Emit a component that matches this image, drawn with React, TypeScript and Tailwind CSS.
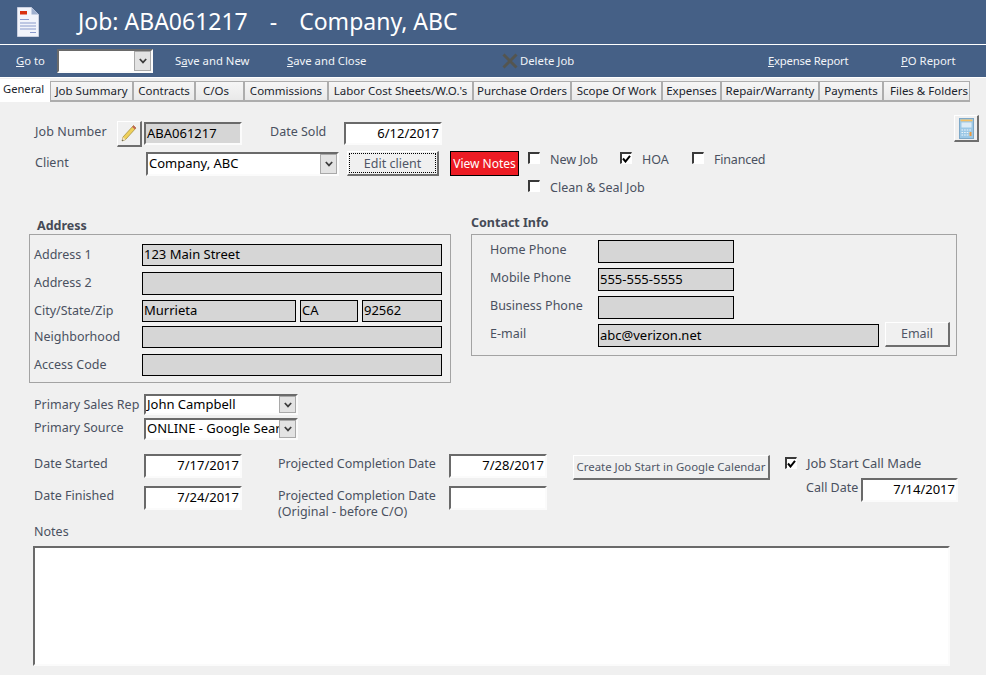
import React from "react";

const labelCls = "text-[12.5px] leading-[16px] text-[#4a5160]";

function Arrow() {
  return (
    <svg width="8" height="6" viewBox="0 0 8 6">
      <path d="M0.8 1 L4 4.4 L7.2 1" fill="none" stroke="#3c3c3c" strokeWidth="1.7" />
    </svg>
  );
}

function SunkenField({ className, value, right }: { className: string; value?: string; right?: boolean }) {
  return (
    <div className={"flex items-center border-t-2 border-l-2 border-r-2 border-b-2 border-t-[#6a6a6a] border-l-[#6a6a6a] border-r-[#fbfbfb] border-b-[#fbfbfb] px-px text-[13px] text-black whitespace-nowrap overflow-hidden " + (right ? "justify-end " : "") + className}>
      {value}
    </div>
  );
}

function GrayField({ className, value }: { className: string; value?: string }) {
  return (
    <div className={"flex items-center border border-black bg-[#d6d6d6] pl-px text-[13px] text-black whitespace-nowrap overflow-hidden " + className}>
      {value}
    </div>
  );
}

function Select({ className, value, btn }: { className: string; value?: string; btn: string }) {
  return (
    <div className={"flex items-stretch border-t-2 border-l-2 border-r-2 border-b-2 border-t-[#6a6a6a] border-l-[#6a6a6a] border-r-[#fbfbfb] border-b-[#fbfbfb] bg-white " + className}>
      <div className="flex-1 min-w-0 flex items-center overflow-hidden whitespace-nowrap pl-px text-[13px] text-black">{value}</div>
      <div className={"flex items-center justify-center bg-[#e3e3e3] border border-[#a9a9a9] " + btn}>
        <Arrow />
      </div>
    </div>
  );
}

function Raised({ className, children }: { className: string; children: React.ReactNode }) {
  return (
    <div className={"flex items-center justify-center border-t border-l border-t-white border-l-white border-r-2 border-b-2 border-r-[#6e6e6e] border-b-[#6e6e6e] bg-[#f0f0f0] text-[#4f5666] whitespace-nowrap " + className}>
      {children}
    </div>
  );
}

function Check({ on, className }: { on?: boolean; className?: string }) {
  return (
    <div className={"w-[12px] h-[12px] shrink-0 flex items-center justify-center border-t-2 border-l-2 border-t-[#3a3a3a] border-l-[#3a3a3a] border-r border-b border-r-white border-b-white bg-white " + (className || "")}>
      {on && (
        <svg width="9" height="8" viewBox="0 0 9 8">
          <path d="M1 3.5 L3.5 6.5 L8 0.8" fill="none" stroke="#000" strokeWidth="2" />
        </svg>
      )}
    </div>
  );
}

const tabs: [string, string][] = [
  ["Job Summary", "w-[83px] justify-center"],
  ["Contracts", "w-[62px] justify-center"],
  ["C/Os", "w-[49px] justify-start pl-[7px]"],
  ["Commissions", "w-[84px] justify-center"],
  ["Labor Cost Sheets/W.O.'s", "w-[145px] justify-center"],
  ["Purchase Orders", "w-[98px] justify-center"],
  ["Scope Of Work", "w-[91px] justify-center"],
  ["Expenses", "w-[59px] justify-center"],
  ["Repair/Warranty", "w-[98px] justify-center"],
  ["Payments", "w-[64px] justify-center"],
  ["Files & Folders", "w-[87px] justify-end pr-px"],
];

function DocIcon() {
  return (
    <svg width="22" height="30" viewBox="0 0 22 30" className="shrink-0">
      <path d="M0.5 0.5 H14.5 L21.5 7.5 V29.5 H0.5 Z" fill="#f2f4fb" stroke="#c9cfe0" />
      <path d="M14.5 0.5 V7.5 H21.5 Z" fill="#9fb0cf" />
      <rect x="3" y="4" width="7" height="3.5" fill="#d9300f" />
      <path d="M3 12.5 H12 M3 16 H19 M3 19 H19 M3 22 H19 M13 25.5 H19" stroke="#8a99cc" strokeWidth="1.2" />
    </svg>
  );
}

function PencilIcon() {
  return (
    <svg width="18" height="19" viewBox="0 0 18 19">
      <path d="M13.5 1.5 L16 4 L5.5 15.6 L2 17 L3 13 Z" fill="#efd05a" stroke="#9c8634" strokeWidth="0.7" />
      <path d="M13.5 1.5 L16 4 L14.8 5.3 L12.2 2.9 Z" fill="#c2605c" />
      <path d="M3 13 L5.5 15.6 L2 17 Z" fill="#efe2c6" />
      <path d="M2 17 L2.4 15.6 L3.5 16.4 Z" fill="#444" />
    </svg>
  );
}

function CalcIcon() {
  return (
    <svg width="15" height="21" viewBox="0 0 15 21">
      <rect x="0.5" y="0.5" width="14" height="20" fill="#9cc8e6" stroke="#7ea9c9" />
      <rect x="1.5" y="1.5" width="12" height="1.8" fill="#f6c063" />
      <rect x="2.5" y="4.5" width="10" height="5" fill="#dcebf6" />
      <path d="M2.5 12 H12.5 M2.5 14.5 H12.5 M2.5 17 H12.5" stroke="#eef6fb" strokeWidth="1.2" strokeDasharray="1.6 1" />
      <rect x="10.5" y="14" width="2" height="4" fill="#ee9a3c" />
    </svg>
  );
}

export default function App() {
  return (
    <div className="w-[986px] h-[675px] overflow-hidden bg-[#f0f0f0] font-['Noto_Sans',sans-serif]">
      <header className="h-[44px] bg-[#456086] flex items-center pl-[17px]">
        <DocIcon />
        <div className="ml-[39px] mb-[3px] flex text-[23px] leading-[30px] text-white whitespace-nowrap">
          <span>Job: ABA061217</span>
          <span className="ml-[22px]">-</span>
          <span className="ml-[22px]">Company, ABC</span>
        </div>
      </header>
      <nav className="h-[33px] bg-[#456086] border-t border-white flex items-center text-[11.3px] text-[#f1f4f8] whitespace-nowrap">
        <span className="ml-[16px] w-[41px]"><u>G</u>o to</span>
        <Select className="w-[96px] h-[24px]" btn="w-[17px]" />
        <span className="ml-[22px] w-[112px]">S<u>a</u>ve and New</span>
        <span className="w-[215px]"><u>S</u>ave and Close</span>
        <svg width="16" height="16" viewBox="0 0 16 16" className="shrink-0">
          <path d="M1.5 1.5 L14.5 14.5 M14.5 1.5 L1.5 14.5" stroke="#54554f" strokeWidth="3" />
        </svg>
        <span className="ml-[2px] w-[248px]">Delete Job</span>
        <span className="w-[133px] tracking-[-0.2px]"><u>E</u>xpense Report</span>
        <span><u>P</u>O Report</span>
      </nav>
      <div className="border-t border-white pt-[3px] bg-[#f0f0f0]">
        <div className="flex h-[21px] w-[970px] text-[11.5px] text-[#20242c] whitespace-nowrap">
          <div className="w-[50px] h-[23px] -mt-[2px] bg-white flex items-center pl-[3px] pb-[3px] text-[11.2px] z-10">General</div>
          {tabs.map(([t, w]) => (
            <div key={t} className={"flex items-center border border-[#adadad] border-b-2 pb-px bg-gradient-to-b from-[#f6f6f6] to-[#e9e9e9] " + w}>
              {t}
            </div>
          ))}
        </div>
      </div>

      <div className="flex pl-[34px] pr-[7px] pt-[13px]">
        <div className="pt-[6px] flex-1">
          <div className="flex items-start">
            <span className={labelCls + " w-[83px] pt-[3px] pl-px tracking-[0.1px]"}>Job Number</span>
            <Raised className="w-[25px] h-[26px]"><PencilIcon /></Raised>
            <SunkenField className="ml-[2px] mt-px w-[98px] h-[23px] bg-[#d6d6d6]" value="ABA061217" />
            <span className={labelCls + " ml-[28px] w-[74px] pt-[3px]"}>Date Sold</span>
            <SunkenField className="mt-px w-[98px] h-[23px] bg-white" value="6/12/2017" right />
          </div>
          <div className="flex items-start mt-[4px]">
            <span className={labelCls + " w-[112px] pl-px pt-[4px]"}>Client</span>
            <Select className="mt-px w-[193px] h-[24px]" value="Company, ABC" btn="w-[17px]" />
            <Raised className="ml-[8px] w-[92px] h-[25px] text-[12.5px]">
              <span className="w-[87px] h-[20px] flex items-center justify-center border border-dotted border-black pt-[3px]">Edit client</span>
            </Raised>
            <div className="ml-[11px] w-[69px] h-[25px] flex items-center justify-center bg-[#ed1c24] border border-black text-[12px] text-white whitespace-nowrap">View Notes</div>
            <div className="ml-[9px] flex flex-col">
              <div className="flex items-start h-[16px] mt-px">
                <Check />
                <span className={labelCls + " ml-[10px] w-[70px]"}>New Job</span>
                <Check on />
                <span className={labelCls + " ml-[10px] w-[50px]"}>HOA</span>
                <Check />
                <span className={labelCls + " ml-[10px] tracking-[-0.2px]"}>Financed</span>
              </div>
              <div className="flex items-start h-[16px] mt-[12px]">
                <Check />
                <span className={labelCls + " ml-[10px]"}>Clean &amp; Seal Job</span>
              </div>
            </div>
          </div>
        </div>
        <Raised className="w-[25px] h-[27px] shrink-0"><CalcIcon /></Raised>
      </div>

      <div className="flex pl-[29px] mt-[20px]">
        <div className="w-[422px]">
          <div className="h-[16px] pl-[8px] pt-[2px] text-[12.5px] leading-[16px] font-bold text-[#454a56]">Address</div>
          <div className="mt-[2px] h-[149px] border border-[#a3a3a3] pt-[9px] pl-[4px]">
            <div className="flex items-start h-[22px]">
              <span className={labelCls + " w-[108px] pt-[3px]"}>Address 1</span>
              <GrayField className="w-[300px] h-[22px]" value="123 Main Street" />
            </div>
            <div className="flex items-start h-[23px] mt-[6px]">
              <span className={labelCls + " w-[108px] pt-[3px]"}>Address 2</span>
              <GrayField className="w-[300px] h-[23px]" />
            </div>
            <div className="flex items-start h-[22px] mt-[5px]">
              <span className={labelCls + " w-[108px] pt-[3px]"}>City/State/Zip</span>
              <GrayField className="w-[154px] h-[22px]" value="Murrieta" />
              <GrayField className="ml-[4px] w-[58px] h-[22px]" value="CA" />
              <GrayField className="ml-[4px] w-[80px] h-[22px]" value="92562" />
            </div>
            <div className="flex items-start h-[22px] mt-[4px]">
              <span className={labelCls + " w-[108px] pt-[3px]"}>Neighborhood</span>
              <GrayField className="w-[300px] h-[22px]" />
            </div>
            <div className="flex items-start h-[22px] mt-[6px]">
              <span className={labelCls + " w-[108px] pt-[3px]"}>Access Code</span>
              <GrayField className="w-[300px] h-[22px]" />
            </div>
          </div>
        </div>
        <div className="ml-[20px] w-[486px]">
          <div className="h-[16px] text-[12.5px] leading-[14px] font-bold text-[#454a56]">Contact Info</div>
          <div className="mt-[2px] h-[122px] border border-[#a3a3a3] pt-[5px] pl-[18px]">
            <div className="flex items-start h-[23px]">
              <span className={labelCls + " w-[108px] pt-[2px]"}>Home Phone</span>
              <GrayField className="w-[136px] h-[23px]" />
            </div>
            <div className="flex items-start h-[23px] mt-[5px]">
              <span className={labelCls + " w-[108px] pt-[2px]"}>Mobile Phone</span>
              <GrayField className="w-[136px] h-[23px]" value="555-555-5555" />
            </div>
            <div className="flex items-start h-[23px] mt-[5px]">
              <span className={labelCls + " w-[108px] pt-[2px]"}>Business Phone</span>
              <GrayField className="w-[136px] h-[23px]" />
            </div>
            <div className="flex items-start h-[23px] mt-[5px]">
              <span className={labelCls + " w-[108px] pt-[2px]"}>E-mail</span>
              <GrayField className="w-[281px] h-[23px]" value="abc@verizon.net" />
              <Raised className="ml-[6px] -mt-[2px] w-[65px] h-[25px] text-[12.5px] pt-px">Email</Raised>
            </div>
          </div>
        </div>
      </div>

      <div className="pl-[34px] mt-[11px]">
        <div className="flex items-center h-[21px]">
          <span className={labelCls + " w-[110px] whitespace-nowrap"}>Primary Sales Rep</span>
          <Select className="w-[154px] h-[21px]" value="John Campbell" btn="w-[17px]" />
        </div>
        <div className="flex items-center h-[22px] mt-[3px]">
          <span className={labelCls + " w-[110px] pb-[2px]"}>Primary Source</span>
          <Select className="w-[154px] h-[22px]" value="ONLINE - Google Search" btn="w-[17px]" />
        </div>
      </div>

      <div className="flex pl-[34px] mt-[14px]">
        <div className="w-[244px] flex flex-col gap-[8px]">
          <div className="flex items-start h-[24px]">
            <span className={labelCls + " w-[110px] pt-[2px]"}>Date Started</span>
            <SunkenField className="w-[98px] h-[24px] bg-white" value="7/17/2017" right />
          </div>
          <div className="flex items-start h-[24px]">
            <span className={labelCls + " w-[110px] pt-[2px]"}>Date Finished</span>
            <SunkenField className="w-[98px] h-[24px] bg-white" value="7/24/2017" right />
          </div>
        </div>
        <div className="w-[295px] flex flex-col gap-[8px]">
          <div className="flex items-start h-[24px]">
            <span className={labelCls + " w-[171px] pt-[2px]"}>Projected Completion Date</span>
            <SunkenField className="w-[98px] h-[24px] bg-white" value="7/28/2017" right />
          </div>
          <div className="flex items-start h-[24px]">
            <span className={labelCls + " w-[171px] pt-[2px]"}>Projected Completion Date<br />(Original - before C/O)</span>
            <SunkenField className="w-[98px] h-[24px] bg-white" right />
          </div>
        </div>
        <Raised className="mt-px w-[197px] h-[25px] text-[11.4px]">Create Job Start in Google Calendar</Raised>
        <div className="ml-[15px]">
          <div className="flex items-start mt-[3px]">
            <Check on />
            <span className="ml-[10px] -mt-px text-[12.9px] leading-[14px] text-[#4a5160]">Job Start Call Made</span>
          </div>
          <div className="flex items-start mt-[8px] ml-[21px]">
            <span className={labelCls + " w-[55px] pt-[2px]"}>Call Date</span>
            <SunkenField className="w-[97px] h-[24px] bg-white" value="7/14/2017" right />
          </div>
        </div>
      </div>

      <div className="pl-[33px] mt-[14px]">
        <div className={labelCls + " pl-px"}>Notes</div>
        <div className="mt-[6px] w-[917px] h-[120px] border-t-2 border-l-2 border-t-[#6a6a6a] border-l-[#6a6a6a] border-r-2 border-b-2 border-r-[#fbfbfb] border-b-[#fbfbfb] bg-white" />
      </div>
    </div>
  );
}
